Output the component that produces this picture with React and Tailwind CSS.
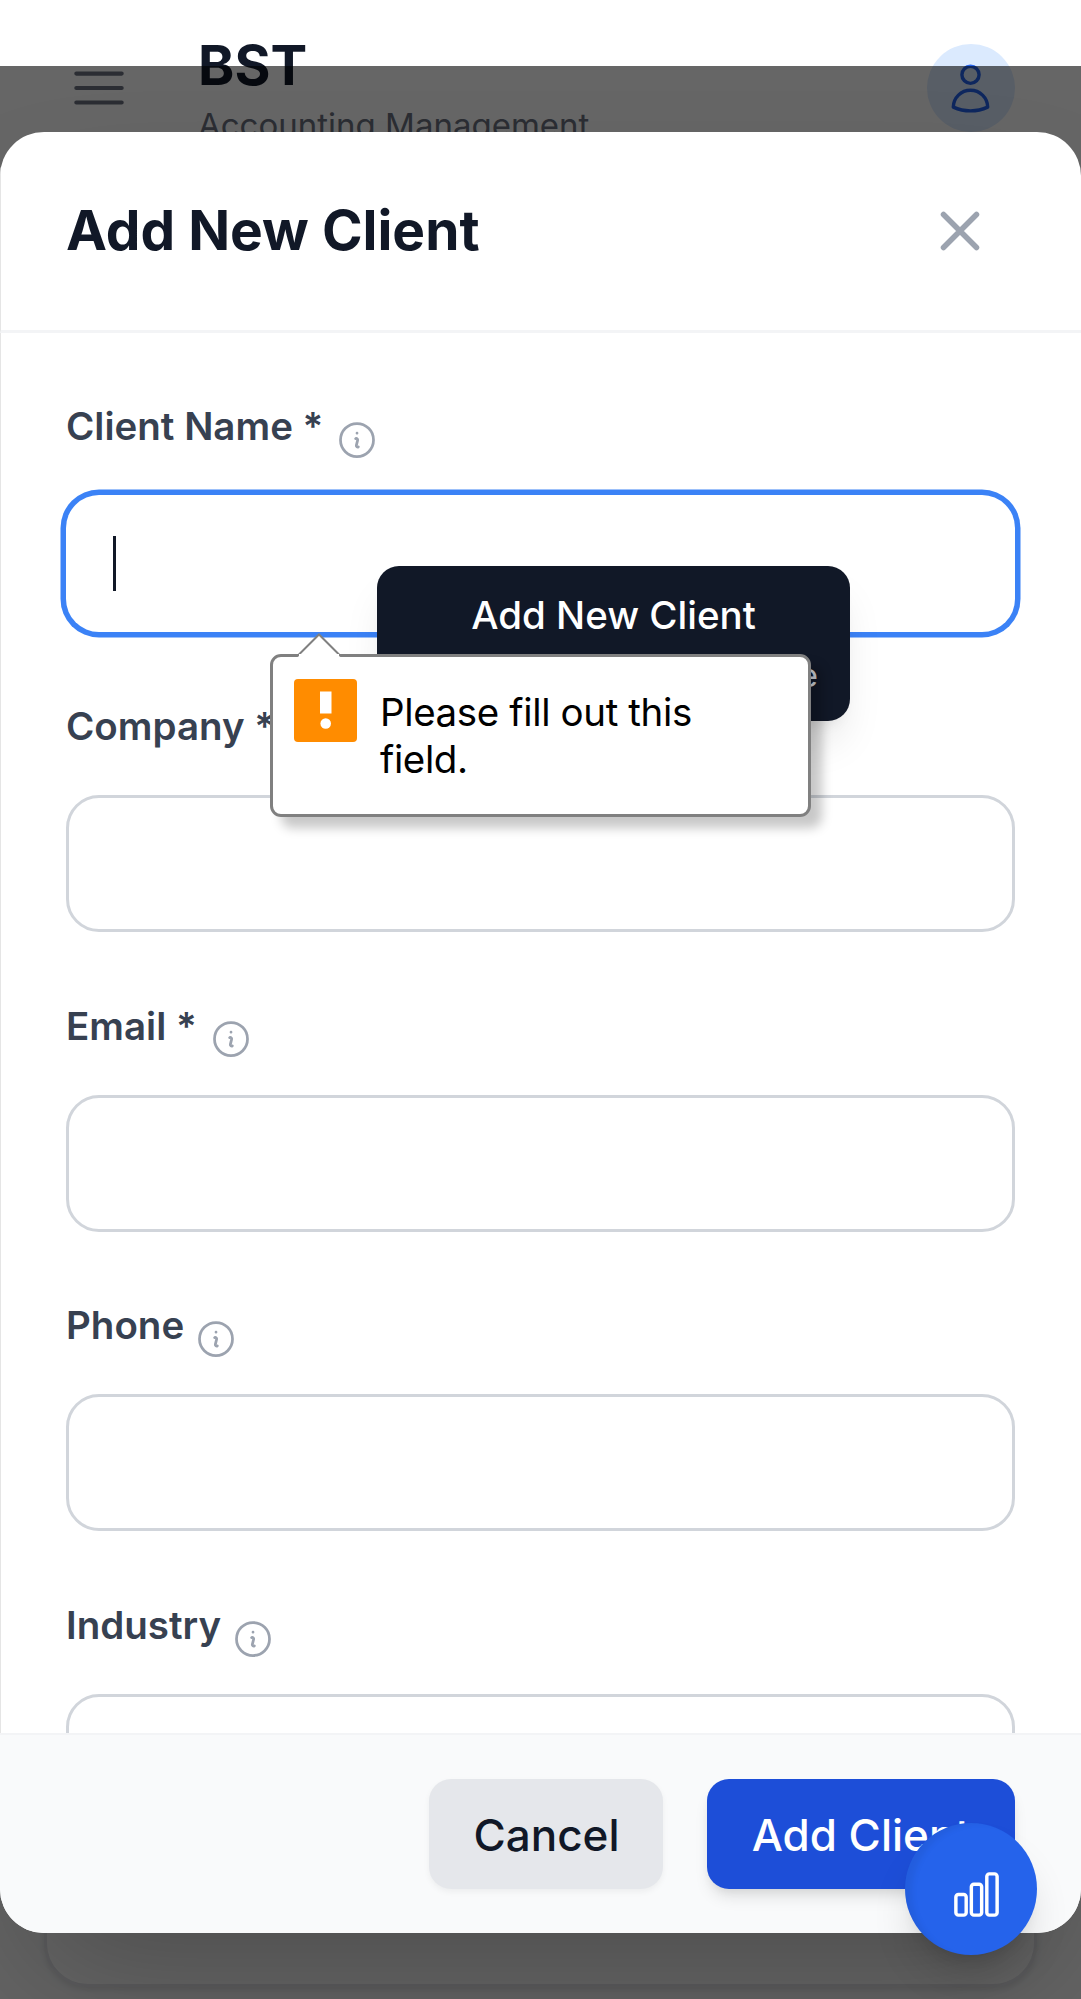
function Icon({ className, strokeWidth = 1.5, children }) {
  return (
    <svg
      viewBox="0 0 24 24"
      fill="none"
      stroke="currentColor"
      strokeWidth={strokeWidth}
      strokeLinecap="round"
      strokeLinejoin="round"
      className={className}
    >
      {children}
    </svg>
  );
}

function InfoIcon() {
  return (
    <Icon className="mt-[20.5px] size-[44px] shrink-0 text-[#9ca3af]">
      <path d="m11.25 11.25.041-.02a.75.75 0 0 1 1.063.852l-.708 2.836a.75.75 0 0 0 1.063.853l.041-.021M21 12a9 9 0 1 1-18 0 9 9 0 0 1 18 0Zm-9-3.75h.008v.008H12V8.25Z" />
    </Icon>
  );
}

function Field({ label, required, focused }) {
  return (
    <div className="h-[299.8px] shrink-0">
      <div className={required ? "flex h-[98px] items-start gap-[12px]" : "flex h-[98px] items-start gap-[10px]"}>
        <span className="pt-[2px] text-[38.5px] leading-[55px] font-semibold text-[#374151]">
          {label}
          {required && " *"}
        </span>
        <InfoIcon />
      </div>
      <div
        className={
          focused
            ? "flex h-[137px] items-center rounded-[33px] bg-white pl-[47px] shadow-[0_0_0_5.5px_#3b82f6]"
            : "flex h-[137px] rounded-[33px] border-[3px] border-[#d1d5db] bg-white"
        }
      >
        {focused && <div className="h-[55px] w-[3px] bg-[#111827]" />}
      </div>
    </div>
  );
}

function Header() {
  return (
    <header className="flex h-[176px] items-start justify-between bg-white pr-[66px] pl-[65.5px]">
      <div className="flex items-start">
        <Icon className="mt-[55px] size-[66px] text-[#6b7280]">
          <path d="M3.75 6.75h16.5M3.75 12h16.5m-16.5 5.25h16.5" />
        </Icon>
        <div className="mt-[30.5px] ml-[66.5px]">
          <div className="text-[55px] leading-[69px] font-bold text-[#111827]">BST</div>
          <div className="mt-[3.5px] text-[33px] leading-[44px] text-[#6b7280]">Accounting Management</div>
        </div>
      </div>
      <div className="mt-[44px] flex size-[88px] items-center justify-center rounded-full bg-[#dbeafe]">
        <Icon className="mr-px size-[55px] text-[#2563eb]">
          <path d="M15.75 6a3.75 3.75 0 1 1-7.5 0 3.75 3.75 0 0 1 7.5 0ZM4.501 20.118a7.5 7.5 0 0 1 14.998 0A17.933 17.933 0 0 1 12 21.75c-2.676 0-5.216-.584-7.499-1.632Z" />
        </Icon>
      </div>
    </header>
  );
}

function Tooltip() {
  return (
    <div className="absolute top-[566px] left-[377px] h-[154.5px] w-[473px] rounded-[22px] bg-[#111827] px-[33px] pt-[22px] shadow-[0_27px_41px_-8px_rgba(0,0,0,0.1),0_11px_16px_-11px_rgba(0,0,0,0.1)]">
      <div className="text-center text-[38.5px] leading-[55px] font-medium text-white">Add New Client</div>
      <div className="mt-[10px] mr-[-1px] text-right text-[33px] leading-[44px] text-[#d1d5db]">e</div>
    </div>
  );
}

function ValidationBubble() {
  return (
    <div className="absolute top-[654px] left-[270px] flex h-[163px] w-[541px] rounded-[11px] border-[3px] border-[#808080] bg-white pt-[22px] pl-[21px] shadow-[11px_11px_11px_rgba(0,0,0,0.22)]">
      <svg viewBox="0 0 46 24" className="absolute top-[-24px] left-[23px] h-[24px] w-[46px]">
        <path d="M1 24 23 2 45 24Z" fill="#fff" />
        <path d="M1 23.500 23 1.500 45 23.500" fill="none" stroke="#808080" strokeWidth="2" />
      </svg>
      <div className="absolute top-[-3px] left-[26px] h-[3px] w-[40px] bg-white" />
      <svg viewBox="0 0 63 63" className="size-[63px] shrink-0">
        <rect width="63" height="63" rx="4" fill="#ff8c00" />
        <rect x="26" y="12.500" width="11.500" height="22" fill="#fff" />
        <circle cx="31.700" cy="44.500" r="5.300" fill="#fff" />
      </svg>
      <div className="mt-[10px] ml-[23px] w-[360px] text-[38.5px] leading-[47px] tracking-[-0.37px] text-black">
        Please fill out this field.
      </div>
    </div>
  );
}

export default function App() {
  return (
    <div className="relative h-[1999px] w-[1081px] overflow-hidden bg-[#f9fafb] font-['Inter',sans-serif]">
      <Header />
      <main className="mx-[44px] h-[1811px] rounded-[44px] border-[3px] border-[#e5e7eb] bg-white shadow-[0_3px_6px_rgba(0,0,0,0.1)]" />

      <div className="absolute inset-x-0 top-[66px] bottom-0 bg-black/60 pt-[66px]">
        <section className="flex h-[1801px] flex-col overflow-hidden rounded-[44px] bg-white shadow-[0_69px_137px_-33px_rgba(0,0,0,0.25)]">
          <div className="flex h-[201px] shrink-0 items-center justify-between border-b-[3px] border-l border-b-[#f3f4f6] border-l-[#e5e5e5] pr-[88px] pl-[65px]">
            <h2 className="mb-[2px] text-[55px] leading-[77px] font-bold text-[#111827]">Add New Client</h2>
            <Icon className="size-[66px] text-[#9ca3af]" strokeWidth={2}>
              <path d="M6 18 18 6M6 6l12 12" />
            </Icon>
          </div>
          <div className="flex min-h-0 flex-1 flex-col overflow-hidden border-l border-[#e5e5e5] pt-[64px] pr-[66px] pl-[65px]">
            <Field label="Client Name" required focused />
            <Field label="Company" required />
            <Field label="Email" required />
            <Field label="Phone" />
            <Field label="Industry" />
          </div>
          <div className="flex h-[200px] shrink-0 items-start justify-end gap-[44px] border-t-[2px] border-[#f3f4f6] bg-[#f9fafb] pt-[44px] pr-[66px]">
            <button className="h-[110px] w-[234px] rounded-[22px] bg-[#e5e7eb] pt-[2px] pl-px text-[44px] font-medium text-[#111827] shadow-[0_3px_6px_rgba(0,0,0,0.05)]">
              Cancel
            </button>
            <button className="h-[110px] w-[308px] rounded-[22px] bg-[#1d4ed8] pt-[2px] text-[44px] font-medium text-white shadow-[0_11px_16px_-3px_rgba(0,0,0,0.1),0_5px_11px_-5px_rgba(0,0,0,0.1)]">
              Add Client
            </button>
          </div>
        </section>
      </div>

      <Tooltip />
      <ValidationBubble />

      <button className="absolute top-[1823px] left-[905px] flex size-[132px] items-center justify-center rounded-full bg-[#2563eb] pt-[11px] pl-[10px] text-white shadow-[inset_10px_3px_6px_-3px_rgba(0,0,0,0.06),0_27px_41px_-8px_rgba(0,0,0,0.15),0_11px_16px_-11px_rgba(0,0,0,0.15)]">
        <Icon className="size-[55px]">
          <path d="M3 13.125C3 12.504 3.504 12 4.125 12h2.250c.621 0 1.125.504 1.125 1.125v6.750C7.500 20.496 6.996 21 6.375 21h-2.250A1.125 1.125 0 0 1 3 19.875v-6.750ZM9.750 8.625c0-.621.504-1.125 1.125-1.125h2.250c.621 0 1.125.504 1.125 1.125v11.250c0 .621-.504 1.125-1.125 1.125h-2.250a1.125 1.125 0 0 1-1.125-1.125V8.625ZM16.500 4.125c0-.621.504-1.125 1.125-1.125h2.250C20.496 3 21 3.504 21 4.125v15.750c0 .621-.504 1.125-1.125 1.125h-2.250a1.125 1.125 0 0 1-1.125-1.125V4.125Z" />
        </Icon>
      </button>
    </div>
  );
}
